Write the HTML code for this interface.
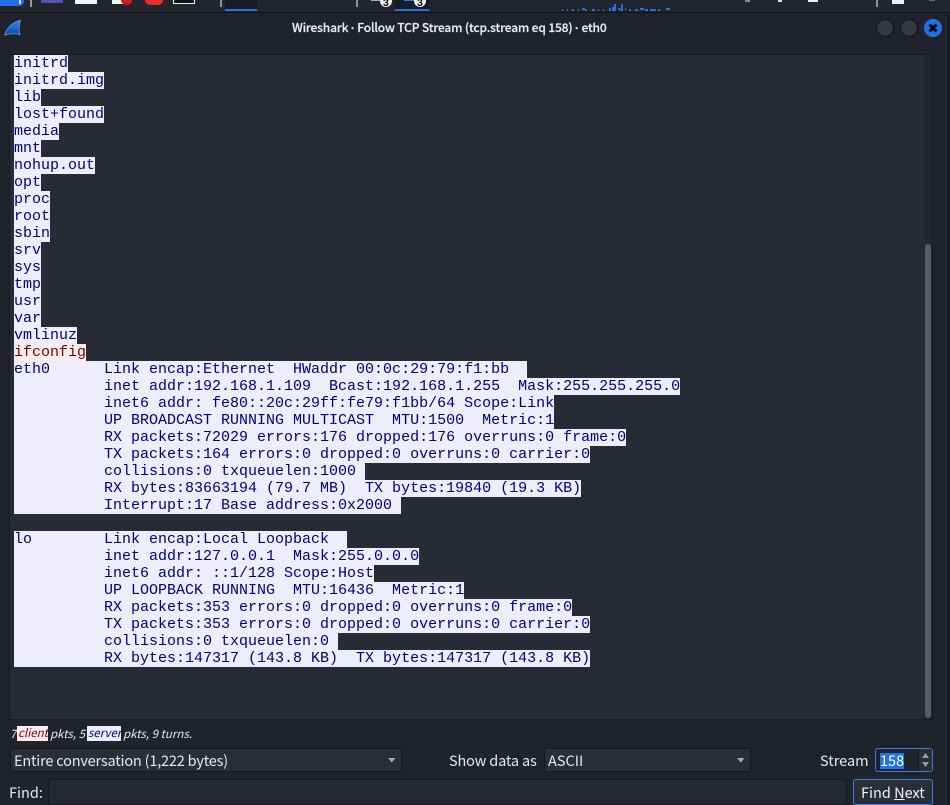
<!DOCTYPE html>
<html><head><meta charset="utf-8">
<style>
html,body{margin:0;padding:0;width:950px;height:805px;overflow:hidden;background:#20232c}
*{box-sizing:border-box}
.abs>*{position:absolute}
#ui{position:absolute;font-family:"Noto Sans CJK JP","Liberation Sans",sans-serif;color:#e6e8ec}
.t{white-space:pre;line-height:20px}
.d{font-family:"Liberation Sans",sans-serif;font-weight:700}
#text{left:14px;top:55px;font:15px/17px "Liberation Mono",monospace;white-space:pre}
#text div{height:17px}
#text span{display:inline-block;height:17px;background:#ededfb;color:#00007f;vertical-align:top}
#text .c{background:#fbeded;color:#7f0000}
</style></head><body>
<div id="ui" class="abs" style="left:0;top:0;width:950px;height:805px">
<!-- top panel -->
<div style="left:0;top:0;width:950px;height:12px;background:#22252d"></div>
<div style="left:0;top:12px;width:950px;height:1px;background:#0e0f13"></div>
<div style="left:0;top:0;width:24px;height:6px;background:#2270e8;border-radius:0 0 5px 0"></div>
<div style="left:19px;top:0;width:2px;height:4px;background:#cfe0fa"></div>
<div style="left:30px;top:0;width:2px;height:7px;background:#9a9ca0"></div>
<div style="left:41px;top:0;width:22px;height:3px;background:#4b58ad"></div>
<div style="left:75px;top:0;width:22px;height:4px;background:#f2f2f2"></div>
<div style="left:112px;top:0;width:14px;height:4px;background:#f2f2f2"></div>
<div style="left:121px;top:0;width:11px;height:5px;background:#d11b1b;border-radius:0 0 6px 6px"></div>
<div style="left:145px;top:0;width:18px;height:5px;background:#ee2b35;border-radius:0 0 9px 9px"></div>
<div style="left:173px;top:0;width:22px;height:4px;border:1px solid #eee;border-top:0;background:#111"></div>
<div style="left:220px;top:0;width:2px;height:7px;background:#8d8f93"></div>
<div style="left:225px;top:0;width:32px;height:11px;background:#1a1c25"></div>
<div style="left:225px;top:9px;width:32px;height:2px;background:#2272e8"></div>
<div style="left:356px;top:0;width:2px;height:7px;background:#8d8f93"></div>
<div style="left:371px;top:0;width:12px;height:1px;background:#aaa"></div>
<div style="left:380px;top:-5px;width:12px;height:12px;background:#f0f0f0;border-radius:50%"></div>
<div class="d" style="left:383px;top:-2px;font-size:10.500px;line-height:10px;color:#111">3</div>
<div style="left:395px;top:0;width:34px;height:11px;background:#1a1c25"></div>
<div style="left:395px;top:9px;width:34px;height:2px;background:#2272e8"></div>
<div style="left:404px;top:0;width:12px;height:1px;background:#3b78e0"></div>
<div style="left:414px;top:-5px;width:12px;height:12px;background:#f0f0f0;border-radius:50%"></div>
<div class="d" style="left:417px;top:-2px;font-size:10.500px;line-height:10px;color:#111">3</div>
<svg style="left:560px;top:0" width="110" height="12"><path d="M2 10h1M7 10h1M12 10h2M18 10h1M22 9h3M25 10h2M32 10h3M38 10h1M43 10h1M50 8v3M53 7v4M55 4v7M58 9h2M60 10h2M62 4v7M65 9h1M69 10h2M75 10h3M80 9h4M85 10h3M90 10h6M98 10h2M106 9h4" stroke="#2272e8" stroke-width="2" fill="none"/></svg>
<div style="left:745px;top:0;width:5px;height:2px;background:#888"></div>
<div style="left:778px;top:0;width:4px;height:2px;background:#ddd"></div>
<div style="left:808px;top:0;width:10px;height:2px;background:#eee"></div>
<div style="left:876px;top:0;width:2px;height:7px;background:#8d8f93"></div>
<div style="left:892px;top:0;width:12px;height:4px;background:#eee"></div>
<div style="left:929px;top:0;width:6px;height:1px;background:#666"></div>
<div style="left:948px;top:13px;width:1px;height:792px;background:#101116"></div>

<!-- titlebar -->
<svg style="left:4px;top:19px" width="17" height="17" viewBox="0 0 17 17"><defs><linearGradient id="g" x1="0" y1="0" x2="0" y2="1"><stop offset="0" stop-color="#2f86f0"/><stop offset="1" stop-color="#0c4aa8"/></linearGradient></defs><path d="M.8 16 C2 10 8 3 16.500 1.500 C14.500 7 14.500 11 16 15.500 C11 14.500 5 14.800 .8 16Z" fill="url(#g)" stroke="#7fa8dc" stroke-width=".7"/></svg>
<div class="t" style="left:292px;top:18px;font-size:12px;font-weight:500;letter-spacing:-.15px;color:#e8ecf2;-webkit-text-stroke:.2px #e8ecf2">Wireshark <span class="d" style="font-size:12px">·</span> Follow TCP Stream (tcp.stream eq 158) <span class="d" style="font-size:12px">·</span> eth0</div>
<div style="left:876px;top:19px;width:18px;height:18px;border-radius:50%;background:#343844;border:1px solid #111319"></div>
<div style="left:900px;top:19px;width:18px;height:18px;border-radius:50%;background:#343844;border:1px solid #111319"></div>
<div style="left:924px;top:19px;width:18px;height:18px;border-radius:50%;background:#2170e6"></div>
<svg style="left:924px;top:19px" width="18" height="18"><path d="M5.500 5.500L12.500 12.500M12.500 5.500L5.500 12.500" stroke="#05080f" stroke-width="3"/></svg>

<!-- text area -->
<div style="left:9px;top:54px;width:924px;height:666px;background:#282b36;border:1px solid #191b21"></div>
<div style="left:924px;top:55px;width:8px;height:664px;background:#23262f"></div>
<div style="left:925px;top:244px;width:6px;height:474px;background:#5a5c62;border-radius:3px"></div>

<!-- stats -->
<div class="t" style="left:10px;top:724px;font-size:11.500px;font-style:italic;color:#e6e8ec">7</div>
<div class="t" style="left:17px;top:726px;width:31px;height:15px;background:#fbeded;line-height:15px;font-size:11.500px;font-style:italic;color:#7f0000;padding-left:1px">client</div>
<div class="t" style="left:50px;top:724px;font-size:11.500px;font-style:italic">pkts, 5</div>
<div class="t" style="left:87px;top:726px;width:34px;height:15px;background:#ededfb;line-height:15px;font-size:11.500px;font-style:italic;color:#00007f;padding-left:1px">server</div>
<div class="t" style="left:123px;top:724px;font-size:11.500px;font-style:italic">pkts, 9 turns.</div>

<!-- combo row -->
<div style="left:10px;top:748px;width:392px;height:24px;background:#2b2e39;border:1px solid #15171c;border-radius:3px"></div>
<div class="t" style="left:14px;top:751px;font-size:14.500px;letter-spacing:-.19px">Entire conversation (1,222 bytes)</div>
<svg style="left:388px;top:758px" width="8" height="5"><path d="M0 0H7.500L3.750 4.500Z" fill="#a8aab0"/></svg>
<div class="t" style="left:449px;top:751px;font-size:14.500px;letter-spacing:-.15px">Show data as</div>
<div style="left:544px;top:748px;width:207px;height:24px;background:#2b2e39;border:1px solid #15171c;border-radius:3px"></div>
<div class="t" style="left:548px;top:751px;font-size:14.500px">ASCII</div>
<svg style="left:737px;top:758px" width="8" height="5"><path d="M0 0H7.500L3.750 4.500Z" fill="#a8aab0"/></svg>
<div class="t" style="left:820px;top:751px;font-size:14.500px">Stream</div>
<div style="left:875px;top:748px;width:58px;height:24px;background:#20232c;border:1px solid #3f7ee0;border-radius:3px"></div>
<div class="t" style="left:880px;top:753px;width:24px;height:16px;line-height:16px;background:#2272e8;color:#fff;font-size:14.500px">158</div>
<div style="left:918px;top:749px;width:14px;height:22px;background:#2b2e39;border-left:1px solid #15171c"></div>
<svg style="left:921px;top:752px" width="9" height="16"><path d="M4.500 1L8 6H1ZM1 10H8L4.500 15Z" fill="#9a9ca2"/></svg>

<!-- find row -->
<div class="t" style="left:9px;top:783px;font-size:14.500px">Find:</div>
<div style="left:48px;top:779px;width:799px;height:26px;background:#262933;border:1px solid #17191e;border-radius:3px"></div>
<div style="left:853px;top:779px;width:80px;height:26px;background:#2b2e39;border:1px solid #3f7ee0;border-radius:3px"></div>
<div class="t" style="left:861px;top:783px;font-size:14.500px;color:#f0f2f5">Find <u>N</u>ext</div>

<!-- stream text -->
<div id="text"><div><span>initrd</span></div><div><span>initrd.img</span></div><div><span>lib</span></div><div><span>lost+found</span></div><div><span>media</span></div><div><span>mnt</span></div><div><span>nohup.out</span></div><div><span>opt</span></div><div><span>proc</span></div><div><span>root</span></div><div><span>sbin</span></div><div><span>srv</span></div><div><span>sys</span></div><div><span>tmp</span></div><div><span>usr</span></div><div><span>var</span></div><div><span>vmlinuz</span></div><div><span class="c">ifconfig</span></div><div><span>eth0      Link encap:Ethernet  HWaddr 00:0c:29:79:f1:bb  </span></div><div><span>          inet addr:192.168.1.109  Bcast:192.168.1.255  Mask:255.255.255.0</span></div><div><span>          inet6 addr: fe80::20c:29ff:fe79:f1bb/64 Scope:Link</span></div><div><span>          UP BROADCAST RUNNING MULTICAST  MTU:1500  Metric:1</span></div><div><span>          RX packets:72029 errors:176 dropped:176 overruns:0 frame:0</span></div><div><span>          TX packets:164 errors:0 dropped:0 overruns:0 carrier:0</span></div><div><span>          collisions:0 txqueuelen:1000 </span></div><div><span>          RX bytes:83663194 (79.7 MB)  TX bytes:19840 (19.3 KB)</span></div><div><span>          Interrupt:17 Base address:0x2000 </span></div><div></div><div><span>lo        Link encap:Local Loopback  </span></div><div><span>          inet addr:127.0.0.1  Mask:255.0.0.0</span></div><div><span>          inet6 addr: ::1/128 Scope:Host</span></div><div><span>          UP LOOPBACK RUNNING  MTU:16436  Metric:1</span></div><div><span>          RX packets:353 errors:0 dropped:0 overruns:0 frame:0</span></div><div><span>          TX packets:353 errors:0 dropped:0 overruns:0 carrier:0</span></div><div><span>          collisions:0 txqueuelen:0 </span></div><div><span>          RX bytes:147317 (143.8 KB)  TX bytes:147317 (143.8 KB)</span></div></div>
</div>
</body></html>
